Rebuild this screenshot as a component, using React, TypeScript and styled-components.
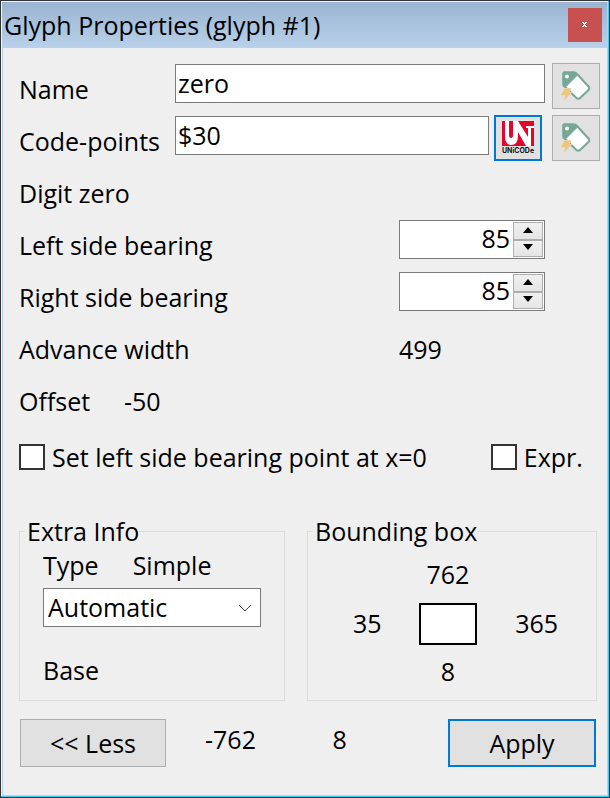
import React, { useState } from "react";
import styled, { createGlobalStyle, css } from "styled-components";

const GlobalStyle = createGlobalStyle`
  *, *::before, *::after { box-sizing: border-box; }
  body { margin: 0; background: #efefef; }
  body, input, select, button {
    font-family: "Open Sans", "Noto Sans", sans-serif;
    font-size: 25px;
    line-height: 34px;
    color: #000;
  }
`;

const Dialog = styled.main`
  border: 1px solid #333;
  background: #efefef;
  box-shadow: inset -1px -1px #45c8f0, inset 1px 1px #f4f4f4, inset -2px -2px #b9d1ea, inset 2px 2px #b9d1ea;
  padding: 1px 2px 2px 1px;
`;

const TitleBar = styled.header`
  display: flex;
  align-items: center;
  justify-content: space-between;
  height: 46px;
  padding: 0 5px 0 2px;
  background: linear-gradient(#99b4d1, #b9d1ea);
`;

const Title = styled.h1`
  margin: 0;
  font-size: 25px;
  font-weight: 400;
  line-height: 48px;
`;

const CloseButton = styled.button`
  display: flex;
  align-items: center;
  justify-content: center;
  width: 34px;
  height: 34px;
  padding: 0;
  border: 0;
  background: #c75050;
`;

const Body = styled.form`
  padding: 15px 7px 28px 17px;
`;

const Row = styled.div`
  display: flex;
  align-items: flex-start;
  height: 52px;
`;

const labelText = css`
  line-height: 52px;
  white-space: nowrap;
`;

const Label = styled.label<{ $wide?: boolean }>`
  ${labelText}
  flex: 0 0 ${(p) => (p.$wide ? "380px" : "156px")};
`;

const Text = styled.span<{ $width?: number }>`
  ${labelText}
  flex: 0 0 ${(p) => (p.$width ? `${p.$width}px` : "auto")};
`;

const TextInput = styled.input`
  flex: 1;
  min-width: 0;
  height: 39px;
  margin-top: 1px;
  padding: 0 2px 2px;
  border: 1px solid #7a7a7a;
  background: #fff;
  outline: 0;
`;

const IconButton = styled.button<{ $active?: boolean }>`
  display: flex;
  align-items: center;
  justify-content: center;
  flex: 0 0 48px;
  height: 46px;
  margin-left: ${(p) => (p.$active ? "5px" : "7px")};
  padding: 0;
  border: ${(p) => (p.$active ? "2px solid #0078d7" : "1px solid #adadad")};
  background: #e1e1e1;

  & + & { margin-left: 10px; }
`;

const SpinBox = styled.div`
  display: flex;
  width: 146px;
  height: 39px;
  margin-top: 1px;
  padding: 1px;
  border: 1px solid #7a7a7a;
  background: #fff;
`;

const SpinInput = styled.input`
  flex: 1;
  min-width: 0;
  padding: 0 3px 3px;
  border: 0;
  outline: 0;
  background: transparent;
  text-align: right;
`;

const SpinButtons = styled.div`
  display: grid;
  grid-template-rows: 1fr 1fr;
  width: 30px;
`;

const SpinButton = styled.button`
  display: flex;
  align-items: center;
  justify-content: center;
  padding: 0 0 2px;
  border: 1px solid #adadad;
  background: linear-gradient(#f0f0f0, #e5e5e5);
`;

const CheckRow = styled.div`
  display: grid;
  grid-template-columns: 471fr 109fr;
  align-items: center;
  height: 60px;
`;

const CheckLabel = styled.label`
  display: flex;
  align-items: center;
  gap: 7px;
  white-space: nowrap;
`;

const CheckBox = styled.input`
  appearance: none;
  width: 26px;
  height: 26px;
  margin: 0;
  border: 2px solid #333;
  background: #fff;

  &:checked { box-shadow: inset 0 0 0 4px #fff, inset 0 0 0 12px #333; }
`;

const Groups = styled.div`
  display: grid;
  grid-template-columns: 266fr 290fr;
  gap: 22px;
  margin: 27px 3px 0 0;
`;

const Group = styled.fieldset`
  min-width: 0;
  height: 187px;
  margin: 0;
  padding: 0 23px;
  border: 1px solid #dcdcdc;
`;

const Legend = styled.legend`
  margin-left: -18px;
  padding: 0 0 0 2px;
`;

const TypeRow = styled.div`
  display: flex;
  gap: 34px;
`;

const SelectBox = styled.div`
  display: grid;
  align-items: center;
  margin: 6px 0 26px;
`;

const Select = styled.select`
  grid-area: 1 / 1;
  appearance: none;
  width: 100%;
  height: 39px;
  padding: 0 4px 2px;
  border: 1px solid #7a7a7a;
  border-radius: 0;
  background: #fff;
`;

const SelectArrow = styled.svg`
  grid-area: 1 / 1;
  justify-self: end;
  margin-right: 9px;
  pointer-events: none;
`;

const Bounds = styled.div`
  display: grid;
  grid-template-columns: 80fr 80fr 96fr;
  grid-template-rows: 50px 48px 48px;
  grid-template-areas: ". top ." "left box right" ". bottom .";
  align-items: center;
  justify-items: center;
  margin: 2px -12px 0 -4px;
`;

const Bound = styled.span<{ $side: "top" | "left" | "right" | "bottom" }>`
  grid-area: ${(p) => p.$side};
  padding-bottom: 2px;
`;

const BoundsRect = styled.div`
  grid-area: box;
  width: 58px;
  height: 42px;
  border: 2px solid #000;
  background: #fff;
`;

const Footer = styled.footer`
  display: grid;
  grid-template-columns: 146px 39px 127fr 115fr 148px;
  margin: 18px 4px 0 1px;
`;

const PushButton = styled.button<{ $primary?: boolean }>`
  grid-column: ${(p) => (p.$primary ? "5" : "1")};
  height: 48px;
  padding: 0;
  border: ${(p) => (p.$primary ? "2px solid #0078d7" : "1px solid #adadad")};
  background: #e1e1e1;
`;

const Metric = styled.output<{ $first?: boolean }>`
  grid-column: ${(p) => (p.$first ? "3" : "4")};
  line-height: 40px;
`;

const TagIcon = () => (
  <svg width="30" height="30" viewBox="0 0 30 30" aria-hidden="true">
    <path d="M3 1.500H13Q14.500 1.500 15.500 2.500L27.500 15.500Q29 17.200 27.500 19L19 27Q17.200 28.500 15.500 27L2.500 14.500V2Z" fill="#fff" stroke="#75a696" strokeWidth="2" strokeLinejoin="round" />
    <path d="M2.500 1H13L16 4.500L5 15.500L2 14V2Z" fill="#75a696" stroke="#75a696" strokeLinejoin="round" />
    <circle cx="6" cy="5.500" r="2" fill="#fff" />
    <path d="M3.500 17.500H10L7.800 21.500H10.500L2.500 30L4.500 24.300H0Z" fill="#efc578" stroke="#e1e1e1" strokeWidth="1" paintOrder="stroke" />
  </svg>
);

const LogoText = styled.text`
  font: 700 7px Inter, sans-serif;
  fill: #111;
`;

const UnicodeLogo = () => (
  <svg width="40" height="36" viewBox="0 0 40 36" aria-hidden="true">
    <path d="M4 1H36V26H4Z" fill="#e2062c" />
    <path d="M7 1H11V15Q11 18 13 18Q15 18 15 15V1H20L30 17V8H33V26H28L20 12V16Q20 25 13 25Q7 25 7 16Z" fill="#fff" />
    <path d="M28 6H36V8H28Z" fill="#fff" />
    <LogoText x="20" y="33" textAnchor="middle">UNiCODe</LogoText>
  </svg>
);

const Triangle = ({ down }: { down?: boolean }) => (
  <svg width="10" height="6" viewBox="0 0 10 6" aria-hidden="true">
    <path d={down ? "M0 0H10L5 6Z" : "M0 6H10L5 0Z"} fill="#000" />
  </svg>
);

function SpinField({ id, label }: { id: string; label: string }) {
  const [value, setValue] = useState(85);
  return (
    <Row>
      <Label $wide htmlFor={id}>{label}</Label>
      <SpinBox>
        <SpinInput id={id} inputMode="numeric" value={value} onChange={(e) => setValue(Number(e.target.value) || 0)} />
        <SpinButtons>
          <SpinButton type="button" aria-label={`Increase ${label}`} onClick={() => setValue(value + 1)}>
            <Triangle />
          </SpinButton>
          <SpinButton type="button" aria-label={`Decrease ${label}`} onClick={() => setValue(value - 1)}>
            <Triangle down />
          </SpinButton>
        </SpinButtons>
      </SpinBox>
    </Row>
  );
}

export default function App() {
  return (
    <>
      <GlobalStyle />
      <Dialog>
        <TitleBar>
          <Title>Glyph Properties (glyph #1)</Title>
          <CloseButton type="button" aria-label="Close">
            <svg width="6" height="6" viewBox="0 0 6 6" aria-hidden="true">
              <path d="M0 0H2V1H3V0H5V1H4V2H3V3H4V4H5V5H3V4H2V5H0V4H1V3H2V2H1V1H0Z" fill="#fff" />
            </svg>
          </CloseButton>
        </TitleBar>
        <Body onSubmit={(e) => e.preventDefault()}>
          <Row>
            <Label htmlFor="name">Name</Label>
            <TextInput id="name" defaultValue="zero" />
            <IconButton type="button" aria-label="Generate name"><TagIcon /></IconButton>
          </Row>
          <Row>
            <Label htmlFor="codes">Code-points</Label>
            <TextInput id="codes" defaultValue="$30" />
            <IconButton type="button" $active aria-label="Unicode"><UnicodeLogo /></IconButton>
            <IconButton type="button" aria-label="Generate code-points"><TagIcon /></IconButton>
          </Row>
          <Row><Text>Digit zero</Text></Row>
          <SpinField id="lsb" label="Left side bearing" />
          <SpinField id="rsb" label="Right side bearing" />
          <Row>
            <Text $width={380}>Advance width</Text>
            <Text>499</Text>
          </Row>
          <Row>
            <Text $width={105}>Offset</Text>
            <Text>-50</Text>
          </Row>
          <CheckRow>
            <CheckLabel><CheckBox type="checkbox" />Set left side bearing point at x=0</CheckLabel>
            <CheckLabel><CheckBox type="checkbox" />Expr.</CheckLabel>
          </CheckRow>
          <Groups>
            <Group>
              <Legend>Extra Info</Legend>
              <TypeRow><span>Type</span><span>Simple</span></TypeRow>
              <SelectBox>
                <Select aria-label="Type" defaultValue="Automatic"><option>Automatic</option></Select>
                <SelectArrow width="14" height="8" viewBox="0 0 14 8" aria-hidden="true">
                  <path d="M1 1L7 7L13 1" fill="none" stroke="#444" />
                </SelectArrow>
              </SelectBox>
              <span>Base</span>
            </Group>
            <Group>
              <Legend>Bounding box</Legend>
              <Bounds>
                <Bound $side="top">762</Bound>
                <Bound $side="left">35</Bound>
                <BoundsRect />
                <Bound $side="right">365</Bound>
                <Bound $side="bottom">8</Bound>
              </Bounds>
            </Group>
          </Groups>
          <Footer>
            <PushButton type="button">&lt;&lt; Less</PushButton>
            <Metric $first>-762</Metric>
            <Metric>8</Metric>
            <PushButton type="submit" $primary>Apply</PushButton>
          </Footer>
        </Body>
      </Dialog>
    </>
  );
}
